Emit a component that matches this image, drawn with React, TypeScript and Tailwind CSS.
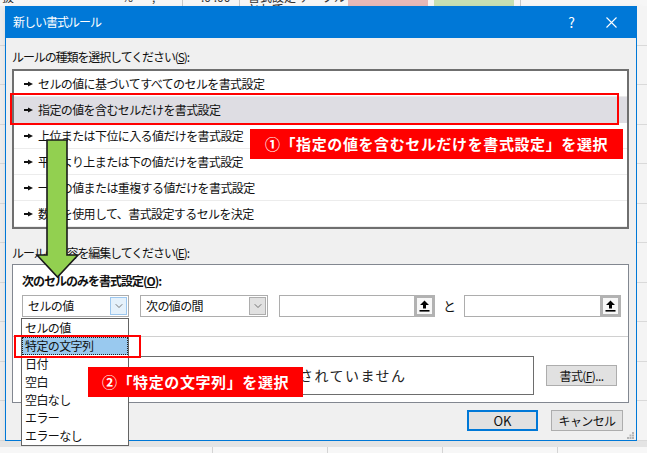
import React from 'react';
import { ChevronDown } from 'lucide-react';

const rules = [
  'セルの値に基づいてすべてのセルを書式設定',
  '指定の値を含むセルだけを書式設定',
  '上位または下位に入る値だけを書式設定',
  '平均より上または下の値だけを書式設定',
  '一意の値または重複する値だけを書式設定',
  '数式を使用して、書式設定するセルを決定',
];

const options = ['セルの値', '特定の文字列', '日付', '空白', '空白なし', 'エラー', 'エラーなし'];

const Bullet = () => (
  <svg width="9" height="6" viewBox="0 0 9 6" className="shrink-0">
    <rect x="0" y="2" width="5" height="2" fill="#111" />
    <polygon points="4,0.5 9,3 4,5.5" fill="#111" />
  </svg>
);

const UploadIcon = () => (
  <svg width="11" height="12" viewBox="0 0 11 12">
    <polygon points="5.5,0.5 10,5 7,5 7,8.5 4,8.5 4,5 1,5" fill="#000" />
    <rect x="0.5" y="10" width="10" height="1.6" fill="#000" />
  </svg>
);

const Combo = ({ label, width, open }: { label: string; width: string; open?: boolean }) => (
  <div className={`flex h-[22px] ${width} items-center border border-[#adadad] bg-white`}>
    <span className="flex-1 pl-[5px] text-[12px] tracking-[-0.6px] text-[#111]">{label}</span>
    <span
      className={
        open
          ? 'mr-px flex h-[18px] w-[17px] items-center justify-center border border-[#9cc7ef] bg-[#e5f1fb]'
          : 'mr-px flex h-[18px] w-[17px] items-center justify-center border border-[#adadad] bg-[#e1e1e1]'
      }
    >
      <ChevronDown size={12} strokeWidth={1.4} color="#444" />
    </span>
  </div>
);

const RefInput = ({ width }: { width: string }) => (
  <div className={`flex h-[22px] ${width} justify-end border border-[#adadad] bg-white`}>
    <span className="-my-px -mr-px flex h-[22px] w-[21px] items-center justify-center border-[3px] border-[#b2b2b2] bg-[#f7f7f7]">
      <UploadIcon />
    </span>
  </div>
);

const Btn = ({ children, primary, width }: { children: React.ReactNode; primary?: boolean; width: string }) => (
  <div
    className={
      primary
        ? `flex h-[21px] ${width} items-center justify-center border-2 border-[#0078d7] bg-[#e1e1e1] text-[13px] text-[#111]`
        : `flex h-[21px] ${width} items-center justify-center border border-[#adadad] bg-[#e1e1e1] text-[12px] tracking-[-0.6px] text-[#111]`
    }
  >
    {children}
  </div>
);

export default function App() {
  return (
    <div className="relative flex h-[457px] w-[647px] flex-col overflow-hidden bg-white font-['Noto_Sans_CJK_JP','Liberation_Sans',sans-serif]">
      {/* excel ribbon, cut off at top */}
      <div className="flex h-[6px] items-start overflow-hidden bg-[#f6f6f6] text-[12px] leading-none text-[#333]">
        <span className="-mt-[9px] ml-[2px] w-[60px]">抜</span>
        <span className="-mt-[9px] w-[60px]">—</span>
        <span className="-mt-[9px] w-[30px]">%</span>
        <span className="-mt-[9px] w-[30px]">,</span>
        <span className="h-[6px] w-px bg-[#c8c8c8]" />
        <span className="-mt-[9px] ml-[6px] w-[50px]">←.0 .00</span>
        <span className="h-[6px] w-px bg-[#c8c8c8]" />
        <span className="-mt-[9px] ml-[8px] w-[100px]">書式設定 テーブルとして</span>
        <span className="h-[6px] w-[80px] bg-[#e6b9b8]" />
        <span className="ml-[6px] h-[6px] w-[80px] bg-[#c6e0b4]" />
        <span className="ml-[6px] h-[6px] w-px bg-[#c8c8c8]" />
      </div>

      <div className="flex h-[435px]">
        {/* sheet at left */}
        <div className="flex w-[5px] flex-col bg-[#ececec]">
          {Array.from({ length: 11 }).map((_, i) => (
            <div key={i} className="h-[40px] border-b border-[#d6d6d6]" />
          ))}
        </div>

        {/* dialog */}
        <div className="flex w-[632px] flex-col border border-t-0 border-[#0078d7] bg-[#f0f0f0] shadow-[3px_4px_6px_rgba(0,0,0,0.25)]">
          <div className="flex h-[32px] items-center bg-[#0078d7] pl-[7px] text-white">
            <span className="flex-1 text-[12px] tracking-[-1px]">新しい書式ルール</span>
            <span className="mr-[31px] text-[14px]">?</span>
            <svg width="11" height="11" viewBox="0 0 11 11" className="mr-[19px]">
              <path d="M0.5 0.5 L10.5 10.5 M10.5 0.5 L0.5 10.5" stroke="#fff" strokeWidth="1.1" />
            </svg>
          </div>

          <div className="flex flex-1 flex-col pl-[6px] pr-[7px] pt-[11px]">
            <div className="h-[16px] text-[12px] leading-[16px] tracking-[-1.1px] text-[#111]">
              ルールの種類を選択してください(<span className="underline">S</span>):
            </div>

            <div className="mt-[4px] flex h-[160px] flex-col border-2 border-[#6f6f6f] bg-white">
              {rules.map((r, i) => (
                <div
                  key={r}
                  className={
                    i === 1
                      ? 'flex h-[26px] items-center gap-[5px] bg-[#dedde3] pl-[10px]'
                      : 'flex h-[26px] items-center gap-[5px] border-b border-[#ececec] pl-[10px]'
                  }
                >
                  <Bullet />
                  <span className="text-[12px] tracking-[-0.6px] text-[#111]">{r}</span>
                </div>
              ))}
            </div>

            <div className="mt-[16px] h-[16px] text-[12px] leading-[16px] tracking-[-1.1px] text-[#111]">
              ルールの内容を編集してください(<span className="underline">E</span>):
            </div>

            <div className="mt-[3px] flex h-[139px] flex-col border border-[#828790] bg-white">
              <div className="pl-[9px] pt-[8px] text-[12px] font-bold leading-[16px] tracking-[-1px] text-[#111]">
                次のセルのみを書式設定(<span className="underline">O</span>):
              </div>
              <div className="mt-[6px] flex items-center pl-[9px]">
                <Combo label="セルの値" width="w-[107px]" open />
                <div className="ml-[11px]">
                  <Combo label="次の値の間" width="w-[128px]" />
                </div>
                <div className="ml-[11px]">
                  <RefInput width="w-[156px]" />
                </div>
                <span className="w-[29px] text-center text-[13px] text-[#111]">と</span>
                <RefInput width="w-[157px]" />
              </div>
              <div className="mt-[19px] h-px bg-[#d0d0d0]" />
              <div className="mt-[19px] flex items-center pl-[9px]">
                <span className="w-[72px] text-[12px] tracking-[-1px] text-[#111]">プレビュー:</span>
                <div className="flex h-[39px] w-[440px] items-center justify-center border border-[#6d6d6d] bg-white text-[14px] tracking-[1.5px] text-[#222]">
                  書式が設定されていません
                </div>
                <div className="ml-[12px]">
                  <Btn width="w-[71px]">
                    書式(<span className="underline">F</span>)...
                  </Btn>
                </div>
              </div>
            </div>

            <div className="mt-[7px] flex justify-end pr-[6px]">
              <Btn width="w-[71px]" primary>
                OK
              </Btn>
              <div className="ml-[13px]">
                <Btn width="w-[72px]">キャンセル</Btn>
              </div>
            </div>
            <div className="mr-[-5px] mt-[1px] flex justify-end">
              <svg width="7" height="7" viewBox="0 0 7 7">
                <rect x="5" y="0" width="2" height="2" fill="#b5b5b5" />
                <rect x="2.5" y="2.5" width="2" height="2" fill="#b5b5b5" />
                <rect x="5" y="2.5" width="2" height="2" fill="#b5b5b5" />
                <rect x="0" y="5" width="2" height="2" fill="#b5b5b5" />
                <rect x="2.5" y="5" width="2" height="2" fill="#b5b5b5" />
                <rect x="5" y="5" width="2" height="2" fill="#b5b5b5" />
              </svg>
            </div>
          </div>
        </div>

        {/* sheet at right */}
        <div className="flex flex-1 flex-col bg-[#f4f4f4]">
          {Array.from({ length: 11 }).map((_, i) => (
            <div key={i} className="h-[40px] border-b border-[#d9d9d9]" />
          ))}
        </div>
      </div>

      {/* sheet below */}
      <div className="h-[6px] bg-[#e4e4e4]" />
      <div className="flex h-[6px] bg-[#f7f7f7]">
        <div className="w-[213px] border-r border-[#d4d4d4]" />
        <div className="w-[115px] border-r border-[#d4d4d4]" />
        <div className="w-[115px] border-r border-[#d4d4d4]" />
        <div className="w-[115px] border-r border-[#d4d4d4]" />
      </div>

      {/* open dropdown list */}
      <div className="absolute left-[21px] top-[318px] flex w-[108px] flex-col border border-[#646464] bg-white">
        {options.map((o, i) => (
          <div
            key={o}
            className={
              i === 1
                ? 'flex h-[18px] items-center border border-dotted border-[#222] bg-[#99c9ef] pl-[2px] text-[12px] tracking-[-0.6px] text-[#111]'
                : 'flex h-[18px] items-center pl-[3px] text-[12px] tracking-[-0.6px] text-[#111]'
            }
          >
            {o}
          </div>
        ))}
      </div>

      {/* annotations */}
      <div className="absolute left-[10px] top-[93px] h-[32px] w-[609px] border-2 border-[#ff0000]" />
      <div className="absolute left-[250px] top-[129px] flex h-[30px] w-[373px] items-center justify-center bg-[#ff0000] text-[15px] font-bold tracking-[0.6px] text-white">
        ①「指定の値を含むセルだけを書式設定」を選択
      </div>
      <div className="absolute left-[14px] top-[335px] h-[23px] w-[127px] border-2 border-[#ff0000]" />
      <div className="absolute left-[88px] top-[367px] flex h-[30px] w-[215px] items-center justify-center bg-[#ff0000] text-[15px] font-bold tracking-[0.6px] text-white">
        ②「特定の文字列」を選択
      </div>

      <svg className="absolute left-[35px] top-[138px]" width="46" height="142" viewBox="0 0 46 142">
        <polygon
          points="12,2 32,2 32,117 43,117 22.5,139 2,117 12,117"
          fill="#92d050"
          stroke="#1a1a1a"
          strokeWidth="1.6"
          strokeLinejoin="miter"
        />
      </svg>
    </div>
  );
}
